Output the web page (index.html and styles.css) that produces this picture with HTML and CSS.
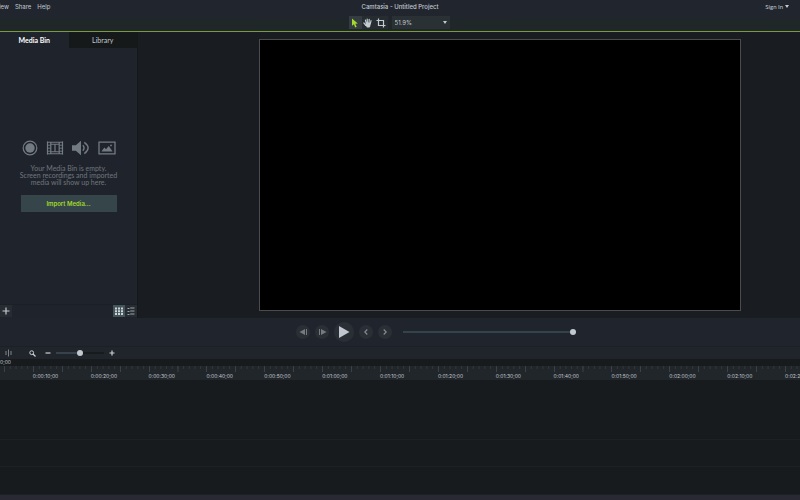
FILE: index.html
```html
<!DOCTYPE html>
<html lang="en">
<head>
    <meta charset="UTF-8">
    <meta name="viewport" content="width=device-width, initial-scale=1.0">
    <title>Camtasia - Untitled Project</title>
    <link rel="stylesheet" href="styles.css">
</head>
<body>
    <header class="header">
        <div class="titlebar">
            <nav class="menu">
                <a href="#">View</a>
                <a href="#">Share</a>
                <a href="#">Help</a>
            </nav>
            <h1 class="title">Camtasia - Untitled Project</h1>
            <button class="sign-in">Sign In
                <svg width="4" height="3" viewBox="0 0 4 3"><path d="M0 0h4L2 3z" fill="currentColor"/></svg>
            </button>
        </div>
        <div class="toolbar">
            <div class="tools">
                <button class="tool active" aria-label="Select">
                    <svg width="8" height="10" viewBox="0 0 8 10"><path d="M1 0.5v7.3l1.9-1.6 1.3 3.2 1.5-.7-1.4-3 2.5-.2z" fill="#a3d92b"/></svg>
                </button>
                <button class="tool" aria-label="Pan">
                    <svg width="10" height="10" viewBox="0 0 10 10" stroke="#c3cad0" stroke-width="1.2" stroke-linecap="round" fill="none"><path d="M2.4 2.2l1 3.4M4.2 1.2l.2 4M6.2 1.3L6 5M8 2.6L7.3 6M.9 5l2 2.4"/><path d="M2.9 4.6h4.9L7.2 8.4l-.9 1H4.1L2.4 7.3z" fill="#c3cad0" stroke="none"/></svg>
                </button>
                <button class="tool" aria-label="Crop">
                    <svg width="10" height="10" viewBox="0 0 10 10" stroke="#c3cad0" stroke-width="1.2" fill="none"><path d="M2.5 .5v7h7M.5 2.5h7v7"/></svg>
                </button>
            </div>
            <select class="scale" aria-label="Canvas zoom">
                <option>51.9%</option>
            </select>
        </div>
    </header>

    <main class="workspace">
        <aside class="bin">
            <div class="tabs">
                <button class="tab active">Media Bin</button>
                <button class="tab">Library</button>
            </div>
            <div class="empty">
                <div class="media-icons">
                    <svg width="16" height="16" viewBox="0 0 16 16"><circle cx="8" cy="8" r="6.8" fill="none" stroke="#747a82" stroke-width="1.2"/><circle cx="8" cy="8" r="4.7" fill="#747a82"/></svg>
                    <svg width="18" height="16" viewBox="0 0 18 16" fill="none" stroke="#747a82"><path d="M1.5 1.5v13M16.5 1.5v13M4.8 2v12M13.2 2v12M9 4v8" stroke-width="1.2"/><path d="M4.8 4.2h8.4M4.8 11.8h8.4M1 2.2h16M1 13.8h16" stroke-width="1.1"/><path d="M1 5.2h4M1 8.2h4M1 11.2h4M13 5.2h4M13 8.2h4M13 11.2h4" stroke-width=".9"/></svg>
                    <svg width="18" height="16" viewBox="0 0 18 16" fill="none" stroke="#747a82"><path d="M0 5.2h3.8L9 .8v14.4l-5.2-4.4H0z" fill="#747a82" stroke="none"/><path d="M10.8 5.3q2.5 2.7 0 5.4M12.3 2.4q7.6 5.6 0 11.2" stroke-width="1.4"/></svg>
                    <svg width="18" height="16" viewBox="0 0 18 16"><path d="M1 2.2h16v11.6H1z" fill="none" stroke="#747a82" stroke-width="1.3"/><path d="M3.4 11.5l3-4 1.6 1.8L10.8 6l3.8 5.5z" fill="#747a82"/><circle cx="13" cy="5.4" r=".9" fill="#747a82"/></svg>
                </div>
                <p>Your Media Bin is empty.<br>Screen recordings and imported<br>media will show up here.</p>
                <button class="import">Import Media...</button>
            </div>
            <div class="bin-footer">
                <button class="small-btn" aria-label="Add">
                    <svg width="8" height="8" viewBox="0 0 8 8"><path d="M4 .5v7M.5 4h7" stroke="#c3cad0" stroke-width="1.2"/></svg>
                </button>
                <div class="views">
                    <button class="small-btn active" aria-label="Grid view">
                        <svg width="8" height="8" viewBox="0 0 8 8" fill="#ccd5d7"><path d="M0 .5h2v2H0zM3 .5h2v2H3zM6 .5h2v2H6zM0 3.3h2v2H0zM3 3.3h2v2H3zM6 3.3h2v2H6zM0 6.1h2v2H0zM3 6.1h2v2H3zM6 6.1h2v2H6z"/></svg>
                    </button>
                    <button class="small-btn" aria-label="List view">
                        <svg width="8" height="8" viewBox="0 0 8 8" stroke="#9ba3aa" fill="none"><path d="M.5 1.5h2M3.2 1h4.3M.5 4.5h2M3.2 4h4.3M.5 7.5h2M3.2 7h4.3"/></svg>
                    </button>
                </div>
            </div>
        </aside>
        <section class="stage">
            <div class="canvas"></div>
        </section>
    </main>

    <div class="playback">
        <button class="round" aria-label="Previous frame">
            <svg width="9" height="8" viewBox="0 0 9 8" fill="#737a82"><path d="M6 1v6L.5 4zM7 1h1v6H7z"/></svg>
        </button>
        <button class="round" aria-label="Next frame">
            <svg width="9" height="8" viewBox="0 0 9 8" fill="#737a82"><path d="M1 1h1v6H1zM3 1v6l5.5-3z"/></svg>
        </button>
        <button class="round play" aria-label="Play">
            <svg width="12" height="12" viewBox="0 0 12 12"><path d="M1 0v12l10.5-6z" fill="#c2c8d0"/></svg>
        </button>
        <button class="round" aria-label="Previous marker">
            <svg width="6" height="8" viewBox="0 0 6 8"><path d="M4.3 1.5L1.8 4l2.5 2.5" fill="none" stroke="#868d95" stroke-width="1.1"/></svg>
        </button>
        <button class="round" aria-label="Next marker">
            <svg width="6" height="8" viewBox="0 0 6 8"><path d="M1.7 1.5L4.2 4 1.7 6.5" fill="none" stroke="#868d95" stroke-width="1.1"/></svg>
        </button>
        <input class="slider seek" type="range" min="0" max="100" value="100" aria-label="Seek">
    </div>

    <section class="timeline">
        <div class="timeline-tools">
            <button class="icon-btn" aria-label="Split">
                <svg width="8" height="8" viewBox="0 0 8 8"><path d="M4 .5h1v7H4z" fill="#7a8086"/><path d="M1 2h2v4H1zM6 2h2v4H6z" fill="#50565c"/></svg>
            </button>
            <button class="icon-btn search" aria-label="Zoom to fit">
                <svg width="7" height="7" viewBox="0 0 7 7" fill="none" stroke="#cbd0d5"><circle cx="2.7" cy="2.7" r="1.9" stroke-width="1"/><path d="M4 4l2.5 2.5" stroke-width="1.3"/></svg>
            </button>
            <button class="icon-btn" aria-label="Zoom out">
                <svg width="6" height="6" viewBox="0 0 6 6"><path d="M.5 3h5" stroke="#cbd0d5" stroke-width="1.2"/></svg>
            </button>
            <input class="slider zoom" type="range" min="0" max="100" value="50" aria-label="Timeline zoom">
            <button class="icon-btn" aria-label="Zoom in">
                <svg width="6" height="6" viewBox="0 0 6 6"><path d="M.5 3h5M3 .5v5" stroke="#cbd0d5" stroke-width="1.2"/></svg>
            </button>
        </div>
        <div class="timecode"><span>0:00:00;00</span></div>
        <div class="ruler">
            <span></span>
            <span>0:00:10;00</span>
            <span>0:00:20;00</span>
            <span>0:00:30;00</span>
            <span>0:00:40;00</span>
            <span>0:00:50;00</span>
            <span>0:01:00;00</span>
            <span>0:01:10;00</span>
            <span>0:01:20;00</span>
            <span>0:01:30;00</span>
            <span>0:01:40;00</span>
            <span>0:01:50;00</span>
            <span>0:02:00;00</span>
            <span>0:02:10;00</span>
            <span>0:02:20;00</span>
        </div>
        <div class="tracks">
            <div class="track tall"></div>
            <div class="track"></div>
            <div class="track"></div>
        </div>
    </section>
    <footer class="scrollbar"></footer>
</body>
</html>
```
FILE: styles.css
```css
* {
    box-sizing: border-box;
}
body {
    margin: 0;
    min-height: 100vh;
    display: flex;
    flex-direction: column;
    overflow: hidden;
    background: #20252c;
    color: #c3cad0;
    font-family: Inter, "Liberation Sans", sans-serif;
    font-size: 6px;
}
button, select {
    margin: 0;
    padding: 0;
    border: none;
    background: none;
    color: inherit;
    font: inherit;
}
svg {
    display: block;
}

/* Header */
.header {
    border-bottom: 1px solid #7a9a42;
    background: linear-gradient(#20252e 55%, #202728 65%);
}
.titlebar {
    display: grid;
    grid-template-columns: 1fr auto 1fr;
    align-items: center;
    height: 13px;
}
.menu {
    display: flex;
    gap: 6px;
    margin-left: -5px;
}
.menu a {
    color: inherit;
    text-decoration: none;
}
.title {
    margin: 0;
    font-size: 6px;
    font-weight: 500;
}
.sign-in {
    display: flex;
    align-items: center;
    justify-self: end;
    gap: 2px;
    margin-right: 11px;
    font-family: Lato, sans-serif;
}
.toolbar {
    display: flex;
    justify-content: center;
    gap: 4px;
    padding: 3px 2px 2px 0;
}
.tools {
    display: flex;
    background: #262d30;
}
.tool {
    display: flex;
    align-items: center;
    justify-content: center;
    width: 13px;
    height: 13px;
}
.tool.active {
    background: #343c41;
}
.scale {
    width: 58px;
    height: 13px;
    padding-left: 3px;
    appearance: none;
    background: url("data:image/svg+xml,%3Csvg xmlns='http://www.w3.org/2000/svg' viewBox='0 0 4 3'%3E%3Cpath d='M0 0h4L2 3z' fill='%23c3cad0'/%3E%3C/svg%3E") right 3px center / 4px 3px no-repeat #2a3134;
}

/* Workspace */
.workspace {
    display: flex;
    height: 286px;
}
.bin {
    display: flex;
    flex-direction: column;
    flex: none;
    width: 138px;
    border-right: 1px solid #15181b;
    background: #1f242c;
}
.tabs {
    display: flex;
}
.tab {
    flex: 1;
    height: 16px;
    background: #16191a;
    font-family: Lato, sans-serif;
    font-size: 7px;
}
.tab.active {
    background: none;
    color: #fff;
    font-weight: 700;
}
.empty {
    display: flex;
    flex-direction: column;
    align-items: center;
    justify-content: center;
    flex: 1;
    text-align: center;
}
.media-icons {
    display: flex;
    align-items: center;
    gap: 8px;
}
.empty p {
    margin: 9px 0;
    color: #70767e;
    font-family: Lato, sans-serif;
    font-size: 7px;
    line-height: 7px;
}
.import {
    width: 96px;
    height: 17px;
    background: #36454a;
    color: #a3d92b;
    font-weight: 600;
}
.bin-footer {
    display: flex;
    justify-content: space-between;
    padding-bottom: 1px;
    border-top: 1px solid #1b2026;
}
.views {
    display: flex;
}
.small-btn {
    display: flex;
    align-items: center;
    justify-content: center;
    width: 12px;
    height: 12px;
    background: #262c32;
}
.small-btn.active {
    background: #43545a;
}
.stage {
    flex: 1;
    padding: 7px 59px 7px 121px;
    background: #191c21;
}
.canvas {
    height: 100%;
    border: 1px solid #4a4b4a;
    background: #000;
}

/* Playback */
.playback {
    display: flex;
    align-items: center;
    justify-content: center;
    gap: 5px;
    height: 28px;
    padding-left: 72px;
    background: #20252d;
}
.round {
    display: flex;
    align-items: center;
    justify-content: center;
    width: 14px;
    height: 14px;
    border-radius: 50%;
    background: #2a2f36;
}
.round.play {
    width: 20px;
    height: 20px;
}
.slider {
    appearance: none;
    height: 7px;
    margin: 0;
    background: linear-gradient(#34424a, #34424a) center / 100% 2px no-repeat;
}
.slider::-webkit-slider-thumb {
    appearance: none;
    width: 6px;
    height: 6px;
    border-radius: 50%;
    background: #c2c8d0;
}
.seek {
    width: 173px;
    margin-left: 6px;
}
.zoom {
    width: 48px;
    background-image: linear-gradient(to right, #38424a 50%, #171b1e 50%);
}

/* Timeline */
.timeline {
    display: flex;
    flex-direction: column;
    flex: 1;
    overflow: hidden;
    background: #171b1d;
}
.timeline-tools {
    display: flex;
    align-items: center;
    gap: 5px;
    height: 13px;
    padding-left: 4px;
    border-top: 1px solid #1b2026;
    background: #20252b;
}
.icon-btn.search {
    margin: 0 4px 0 12px;
}
.timecode {
    display: flex;
    justify-content: flex-end;
    width: 11px;
    height: 7px;
    overflow: hidden;
    font-size: 5px;
    line-height: 7px;
}
.ruler {
    display: flex;
    height: 14px;
    margin: 0 -43px 0 -25px;
    background: #21262b;
}
.ruler span {
    flex: 1;
    padding-top: 7px;
    background:
        linear-gradient(to right, #3b4146 1px, transparent 1px) 0 0 / 50% 6px repeat-x,
        linear-gradient(to right, #32383d 1px, transparent 1px) 0 0 / 10% 3px repeat-x;
    font-size: 5px;
    line-height: 7px;
}
.tracks {
    display: flex;
    flex-direction: column;
    flex: 1;
}
.track {
    flex: 27;
    border-bottom: 1px solid #1d2123;
}
.track.tall {
    flex: 60;
}
.scrollbar {
    height: 5px;
    background: #282932;
}
```
